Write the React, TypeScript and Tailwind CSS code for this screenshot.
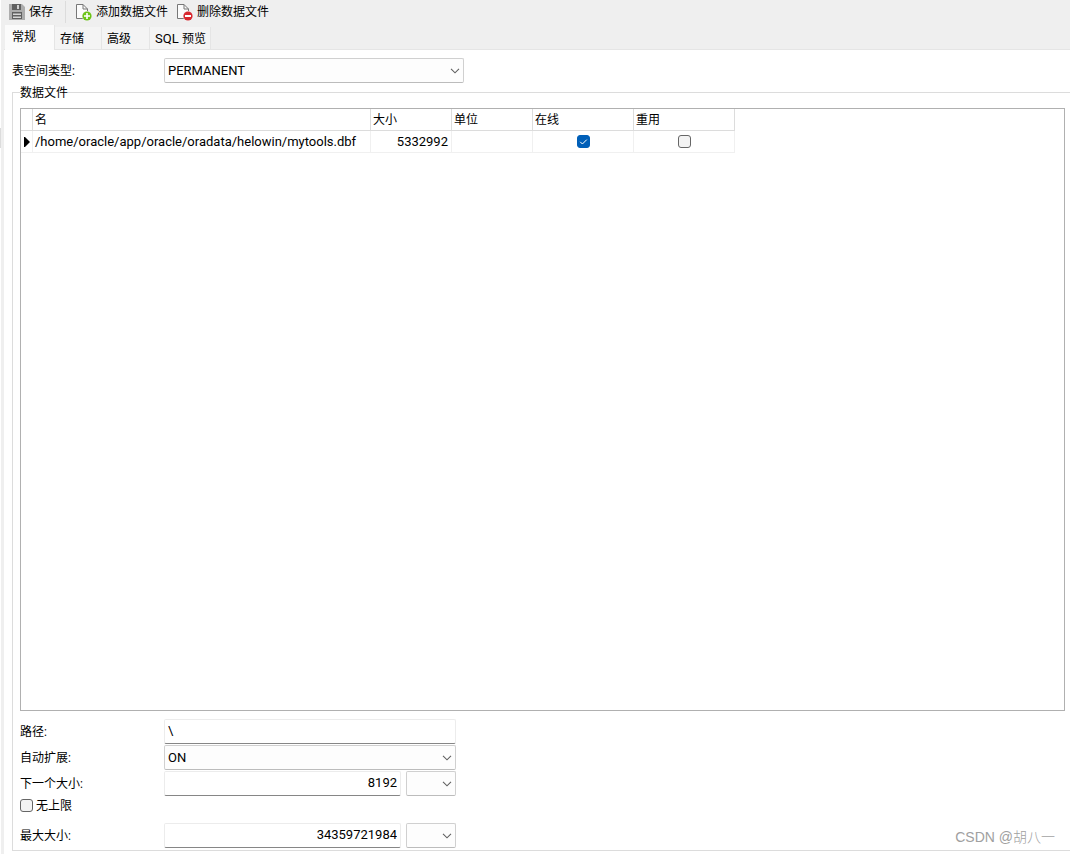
import { useState } from "react";
import type { ReactNode } from "react";

const FIELD =
  "h-[25px] min-w-0 rounded-[2px] border border-[#ececec] border-b-[#868686] bg-white px-[3px] pb-[2px] text-[13px] text-black outline-none";

function SaveIcon() {
  return (
    <svg width="16" height="16" viewBox="0 0 16 16" className="shrink-0" aria-hidden="true">
      <path d="M0 0h13l3 3v13H0z" fill="#adadad" />
      <path d="M3 0h9v6H3z" fill="#606060" />
      <path d="M8 1h2v4H8z" fill="#d0d0d0" />
      <path d="M3 8h10v7H3z" fill="#606060" />
      <path d="M4 9.5h8v1.5H4zM4 12.5h8v1.5H4z" fill="#d6d6d6" />
    </svg>
  );
}

function FileIcon({ kind }: { kind: "add" | "remove" }) {
  return (
    <svg width="17" height="18" viewBox="0 0 17 18" className="shrink-0" aria-hidden="true">
      <path d="M1.5 1.5h6.5l4.5 4.5v9.5h-11z" fill="#fbfbfb" stroke="#777777" />
      <path d="M8 1.5v4.5h4.5" fill="none" stroke="#777777" />
      <circle cx="12" cy="13" r="5" fill="#efefef" />
      <circle cx="12" cy="13" r="4.6" fill={kind === "add" ? "#6cc417" : "#d8282f"} />
      <path
        d={kind === "add" ? "M9 12.2h6v1.6H9zM11.2 10h1.6v6h-1.6z" : "M9 12h6v2H9z"}
        fill="#ffffff"
      />
    </svg>
  );
}

function Select({ id, label, options, className }: { id: string; label?: string; options: string[]; className: string }) {
  return (
    <div className={`relative ${className}`}>
      <select
        id={id}
        aria-label={label}
        className="h-[25px] w-full appearance-none rounded-[2px] border border-[#d0d0d0] border-b-[#bcbcbc] bg-[#fdfdfd] pr-5 pl-[3px] text-[13px] text-black outline-none"
      >
        {options.map((o) => (
          <option key={o}>{o}</option>
        ))}
      </select>
      <svg
        width="10"
        height="6"
        viewBox="0 0 10 6"
        className="pointer-events-none absolute top-[10px] right-[4px]"
        aria-hidden="true"
      >
        <path d="M1 0.8L5 4.8L9 0.8" fill="none" stroke="#606060" strokeWidth="1.1" />
      </svg>
    </div>
  );
}

function Check({ id, label, initial = false }: { id: string; label?: string; initial?: boolean }) {
  const [on, setOn] = useState(initial);
  return (
    <span className="relative block size-[13px] shrink-0">
      <input
        id={id}
        type="checkbox"
        aria-label={label}
        checked={on}
        onChange={(e) => setOn(e.target.checked)}
        className="block size-[13px] appearance-none rounded-[3px] border border-[#666666] bg-[#f3f3f3] checked:border-[#005fb8] checked:bg-[#005fb8]"
      />
      {on && (
        <svg width="13" height="13" viewBox="0 0 13 13" className="pointer-events-none absolute inset-0" aria-hidden="true">
          <path d="M3.2 6.8L5.4 9L9.8 4.6" fill="none" stroke="#ffffff" strokeWidth="1" />
        </svg>
      )}
    </span>
  );
}

function Row({ htmlFor, label, children }: { htmlFor: string; label: string; children: ReactNode }) {
  return (
    <div className="flex items-center">
      <label htmlFor={htmlFor} className="w-36 shrink-0">
        {label}
      </label>
      <div className="flex w-[292px] gap-[5px]">{children}</div>
    </div>
  );
}

const TABS: { id: string; name: ReactNode; width: string }[] = [
  { id: "general", name: "常规", width: "w-[50px]" },
  { id: "storage", name: "存储", width: "w-[47px]" },
  { id: "advanced", name: "高级", width: "w-[48px]" },
  {
    id: "sql",
    name: (
      <>
        <span className="text-[13px]">SQL </span>预览
      </>
    ),
    width: "w-[61px]",
  },
];

const COLUMNS = [
  { name: "名", width: "w-[338px]" },
  { name: "大小", width: "w-[81px]" },
  { name: "单位", width: "w-[81px]" },
  { name: "在线", width: "w-[101px]" },
  { name: "重用", width: "w-[101px]" },
];

const CELL = "h-[22px] border-r border-b border-[#f0f0f0] p-0";

export default function App() {
  const [tab, setTab] = useState("general");
  return (
    <div className="relative flex min-h-screen flex-col bg-white font-['Roboto','Noto_Sans_CJK_SC',sans-serif] text-[12px] leading-[16px] text-black">
      <div className="flex flex-1 border-l border-white">
        <div className="w-[3px] shrink-0 bg-[#efefef]" />
        <div className="flex min-w-0 flex-1 flex-col">
          <header className="flex h-[25px] items-center bg-[#efefef] pb-[2px] pl-[5px]">
            <button type="button" className="flex items-center gap-1">
              <SaveIcon />
              保存
            </button>
            <span className="mr-[9px] ml-3 h-[22px] w-px bg-[#dcdcdc]" />
            <button type="button" className="flex items-center gap-1">
              <FileIcon kind="add" />
              添加数据文件
            </button>
            <button type="button" className="ml-2 flex items-center gap-1">
              <FileIcon kind="remove" />
              删除数据文件
            </button>
          </header>

          <div role="tablist" className="flex h-[25px] items-end border-b border-[#e5e5e5] bg-[#efefef] pl-px">
            {TABS.map((t) => (
              <button
                key={t.id}
                type="button"
                role="tab"
                aria-selected={tab === t.id}
                onClick={() => setTab(t.id)}
                className={`shrink-0 border-r border-[#e5e5e5] text-left whitespace-nowrap ${t.width} ${
                  tab === t.id ? "-mb-px h-[25px] bg-[#fbfbfb] pb-[2px] pl-[7px]" : "h-[22px] bg-[#f4f4f4] pt-px pl-[5px]"
                }`}
              >
                {t.name}
              </button>
            ))}
          </div>

          <main className="flex flex-1 flex-col pt-2 pb-[3px] pl-2">
            <div className="mb-[2px] flex items-center">
              <label htmlFor="type" className="w-[152px] shrink-0">
                表空间类型:
              </label>
              <Select id="type" options={["PERMANENT"]} className="w-[300px]" />
            </div>

            <fieldset className="flex min-w-0 flex-1 flex-col border border-r-0 border-[#dcdcdc] pt-2 pr-[5px] pb-[2px] pl-[7px]">
              <legend className="h-[15px] leading-[17px]">数据文件</legend>

              <div className="flex-1 overflow-auto border border-[#b0b0b0]">
                <table className="w-[714px] table-fixed border-separate border-spacing-0">
                  <thead>
                    <tr>
                      <th className="h-[22px] w-3 border-r border-b border-[#dcdcdc] p-0" aria-label="当前行" />
                      {COLUMNS.map((c) => (
                        <th
                          key={c.name}
                          className={`h-[22px] border-r border-b border-[#dcdcdc] p-0 pl-[2px] text-left font-normal ${c.width}`}
                        >
                          {c.name}
                        </th>
                      ))}
                    </tr>
                  </thead>
                  <tbody>
                    <tr>
                      <td className={CELL}>
                        <svg width="6" height="10" viewBox="0 0 6 10" className="ml-[3px] block" aria-hidden="true">
                          <path d="M0 0h1l5 5l-5 5H0z" fill="#000000" />
                        </svg>
                      </td>
                      <td className={`${CELL} pl-[2px] text-[13px]`}>/home/oracle/app/oracle/oradata/helowin/mytools.dbf</td>
                      <td className={`${CELL} pr-[3px] text-right text-[13px]`}>5332992</td>
                      <td className={CELL} />
                      <td className={CELL}>
                        <div className="flex justify-center">
                          <Check id="online" label="在线" initial />
                        </div>
                      </td>
                      <td className={CELL}>
                        <div className="flex justify-center">
                          <Check id="reuse" label="重用" />
                        </div>
                      </td>
                    </tr>
                  </tbody>
                </table>
              </div>

              <div className="flex flex-col gap-px pt-2">
                <Row htmlFor="path" label="路径:">
                  <input id="path" type="text" defaultValue="\" className={`${FIELD} flex-1`} />
                </Row>
                <Row htmlFor="extend" label="自动扩展:">
                  <Select id="extend" options={["ON", "OFF"]} className="flex-1" />
                </Row>
                <Row htmlFor="next" label="下一个大小:">
                  <input id="next" type="text" defaultValue="8192" className={`${FIELD} flex-1 text-right`} />
                  <Select id="next-unit" label="下一个大小单位" options={["", "K", "M", "G"]} className="w-[50px]" />
                </Row>
                <div className="mb-2 flex h-[17px] items-center gap-[3px]">
                  <Check id="unlimited" />
                  <label htmlFor="unlimited">无上限</label>
                </div>
                <Row htmlFor="max" label="最大大小:">
                  <input id="max" type="text" defaultValue="34359721984" className={`${FIELD} flex-1 text-right`} />
                  <Select id="max-unit" label="最大大小单位" options={["", "K", "M", "G"]} className="w-[50px]" />
                </Row>
              </div>
            </fieldset>
          </main>
        </div>
      </div>

      <span className="absolute top-32 left-0 h-5 w-px bg-[#dcdcdc]" />
      <p className="absolute right-[15px] bottom-2 font-['Liberation_Sans','Noto_Sans_CJK_SC',sans-serif] text-[14px] leading-[18px] font-light text-[#a0a0a0]">
        CSDN @胡八一
      </p>
    </div>
  );
}
